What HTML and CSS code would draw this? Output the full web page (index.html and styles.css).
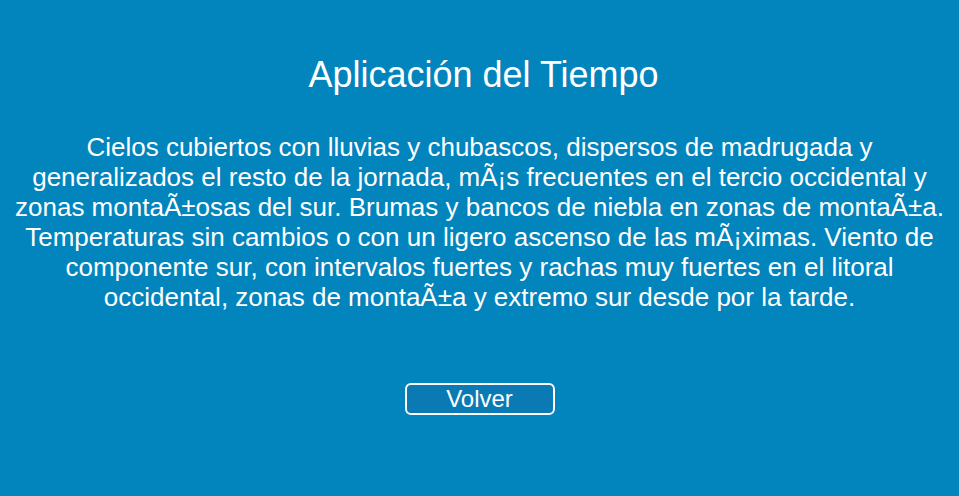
FILE: index.html
```html
<!DOCTYPE html>
<html lang="es">
<head>
<meta charset="utf-8">
<title>Aplicación del Tiempo</title>
<link rel="stylesheet" href="styles.css">
</head>
<body>
<main class="app">
  <h1 class="title">Aplicación del Tiempo</h1>
  <p class="forecast">Cielos cubiertos con lluvias y chubascos, dispersos de madrugada y generalizados el resto de la jornada, mÃ¡s frecuentes en el tercio occidental y zonas montaÃ±osas del sur. Brumas y bancos de niebla en zonas de montaÃ±a. Temperaturas sin cambios o con un ligero ascenso de las mÃ¡ximas. Viento de componente sur, con intervalos fuertes y rachas muy fuertes en el litoral occidental, zonas de montaÃ±a y extremo sur desde por la tarde.</p>
  <button class="back" type="button">Volver</button>
</main>
</body>
</html>
```
FILE: styles.css
```css
html, body {
  margin: 0;
  height: 100%;
}
body {
  background: #0284bd;
  color: #ffffff;
  font-family: "Liberation Sans", Arial, sans-serif;
}
.app {
  display: flex;
  flex-direction: column;
  align-items: center;
  padding: 0 6px;
  text-align: center;
}
.title {
  margin: 54px 0 0;
  padding-left: 8px;
  font-size: 36px;
  font-weight: normal;
  line-height: 42px;
}
.forecast {
  margin: 36px 0 0;
  font-size: 26px;
  line-height: 30px;
}
.back {
  margin-top: 71px;
  width: 150px;
  height: 32px;
  background: #0a7ab5;
  color: #ffffff;
  border: 2px solid #ffffff;
  border-radius: 6px;
  font-family: "Liberation Sans", Arial, sans-serif;
  font-size: 24px;
  padding: 0;
}
```
